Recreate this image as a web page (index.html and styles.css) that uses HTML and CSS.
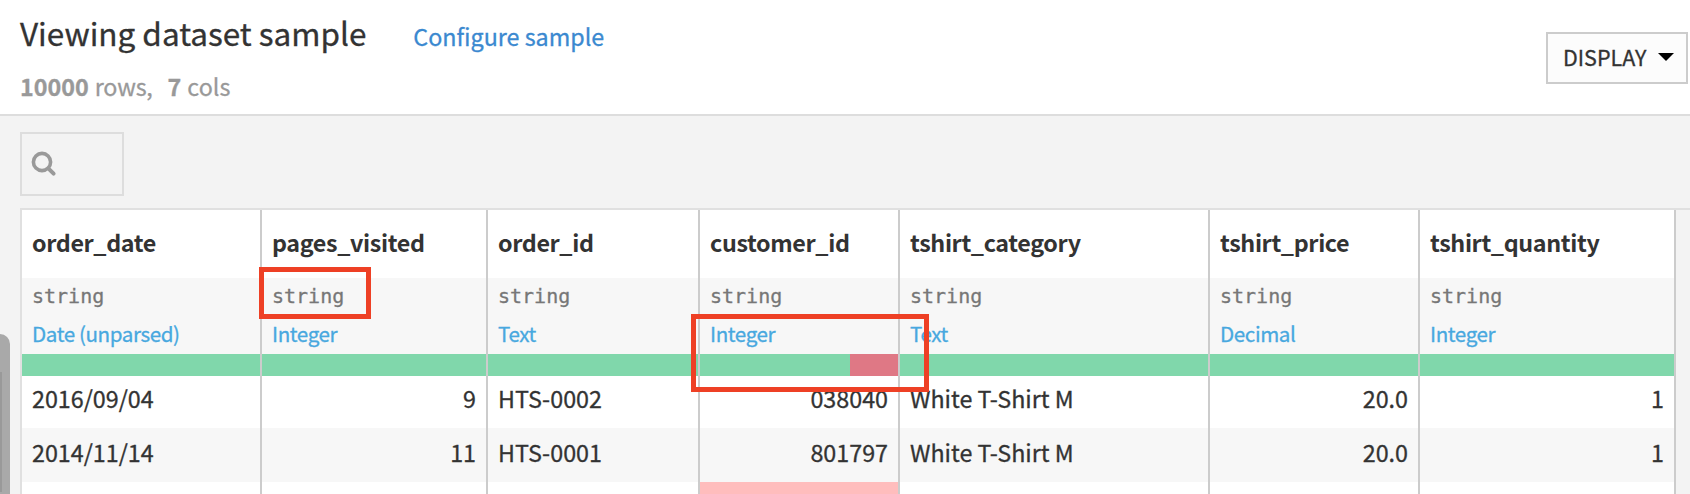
FILE: index.html
```html
<!DOCTYPE html>
<html lang="en">
<head>
<meta charset="utf-8">
<title>Dataset sample</title>
<link rel="stylesheet" href="styles.css">
</head>
<body>
<header class="header">
  <div class="info">
    <div class="heading"><h1 class="title">Viewing dataset sample</h1><a class="configure">Configure sample</a></div>
    <div class="counts"><b>10000</b><span class="rows">rows,</span><b>7</b><span>cols</span></div>
  </div>
  <button class="display"><span class="display-label">DISPLAY</span><svg width="16" height="8" viewBox="0 0 16 8"><path d="M0 0H16L8 8Z" fill="#000"/></svg></button>
</header>
<main class="main">
  <div class="search"><svg width="26" height="26" viewBox="0 0 26 26" fill="none" stroke="#999" stroke-linecap="round"><circle cx="11" cy="11" r="8.6" stroke-width="3.6"/><path d="M17.8 17.8L22.6 22.6" stroke-width="4"/></svg></div>
  <div class="grid">
    <section class="col c1"><h2 class="name"><span>order_date</span></h2><div class="meta"><div class="type">string</div><div class="meaning">Date (unparsed)</div></div><div class="quality"></div><div class="cell">2016/09/04</div><div class="cell alt">2014/11/14</div><div class="cell"></div></section>
    <section class="col c2 num"><h2 class="name"><span>pages_visited</span></h2><div class="meta"><div class="type">string</div><div class="meaning">Integer</div></div><div class="quality"></div><div class="cell">9</div><div class="cell alt">11</div><div class="cell"></div></section>
    <section class="col c3"><h2 class="name"><span>order_id</span></h2><div class="meta"><div class="type">string</div><div class="meaning">Text</div></div><div class="quality"></div><div class="cell">HTS-0002</div><div class="cell alt">HTS-0001</div><div class="cell"></div></section>
    <section class="col c4 num"><h2 class="name"><span>customer_id</span></h2><div class="meta"><div class="type">string</div><div class="meaning">Integer</div></div><div class="quality"><div class="invalid-part"></div></div><div class="cell">038040</div><div class="cell alt">801797</div><div class="cell invalid"></div></section>
    <section class="col c5"><h2 class="name"><span>tshirt_category</span></h2><div class="meta"><div class="type">string</div><div class="meaning">Text</div></div><div class="quality"></div><div class="cell">White T-Shirt M</div><div class="cell alt">White T-Shirt M</div><div class="cell"></div></section>
    <section class="col c6 num"><h2 class="name"><span>tshirt_price</span></h2><div class="meta"><div class="type">string</div><div class="meaning">Decimal</div></div><div class="quality"></div><div class="cell">20.0</div><div class="cell alt">20.0</div><div class="cell"></div></section>
    <section class="col c7 num"><h2 class="name"><span>tshirt_quantity</span></h2><div class="meta"><div class="type">string</div><div class="meaning">Integer</div></div><div class="quality"></div><div class="cell">1</div><div class="cell alt">1</div><div class="cell"></div></section>
  </div>
</main>
<div class="handle"></div>
<div class="mark mark-type"></div>
<div class="mark mark-quality"></div>
</body>
</html>
```
FILE: styles.css
```css
* { box-sizing: border-box; }
body {
  margin: 0;
  height: 494px;
  overflow: hidden;
  position: relative;
  background: #f3f3f3;
  color: #333;
  font: 23.3px/30px "Noto Sans CJK SC", "Noto Sans", sans-serif;
  -webkit-text-stroke: 0.3px;
}
svg { display: block; }
.header {
  display: flex;
  justify-content: space-between;
  height: 116px;
  padding: 14px 2px 0 20px;
  background: #fff;
  border-bottom: 2px solid #ddd;
}
.heading { display: flex; height: 40px; align-items: baseline; gap: 47px; }
.title { margin: 0; font-size: 31.5px; line-height: 36px; font-weight: 400; }
.configure { color: #3b89d0; }
.counts { display: flex; height: 30px; margin-top: 17px; color: #999; }
.counts b { font-weight: 700; margin-right: 6px; }
.rows { margin-right: 15px; letter-spacing: -0.2px; }
.display {
  display: flex;
  align-items: center;
  justify-content: space-between;
  width: 142px;
  height: 52px;
  margin-top: 18px;
  padding: 0 12px 2px 15px;
  border: 2px solid #ccc;
  background: #fcfcfc;
  color: #333;
  font: 21.5px/30px "Noto Sans CJK SC", "Noto Sans", sans-serif;
  -webkit-text-stroke: 0.3px;
}
.main { padding-top: 16px; }
.search {
  width: 104px;
  height: 64px;
  margin-left: 20px;
  padding: 17px 9px;
  border: 2px solid #ddd;
}
.grid {
  display: flex;
  height: 286px;
  margin: 12px 0 0 20px;
  border: solid #e0e0e0;
  border-width: 2px 0 0 2px;
}
.col { border-right: 2px solid #ccc; background: #fff; white-space: nowrap; overflow: hidden; }
.c1 { width: 240px; }
.c2 { width: 226px; }
.c3 { width: 212px; }
.c4 { width: 200px; }
.c5 { width: 310px; }
.c6 { width: 210px; }
.c7 { width: 256px; }
.name { margin: 0; height: 68px; padding: 17px 10px 0; font-size: 23.3px; line-height: 30px; font-weight: 700; letter-spacing: -0.36px; -webkit-text-stroke: 0; }
.meta { height: 76px; padding: 3px 10px 0; background: #f7f7f7; }
.type { color: #777; font: 20px/30px "DejaVu Sans Mono", monospace; }
.meaning { height: 30px; margin-top: 7px; color: #48a8df; font-size: 20.6px; letter-spacing: -0.4px; }
.quality { display: flex; justify-content: flex-end; height: 22px; background: #80d7ab; }
.invalid-part { width: 48px; background: #df7885; }
.cell { height: 52px; padding: 7px 10px 0; line-height: 30px; }
.cell.alt { height: 54px; padding-top: 9px; background: #f7f7f7; }
.num .cell { text-align: right; }
.cell.invalid { background: #ffbdbd; }
.handle {
  position: absolute;
  left: -10px;
  top: 334px;
  width: 20px;
  height: 180px;
  border-radius: 15px;
  background: linear-gradient(#999, #999) 0 38px / 12px 120px no-repeat #a9a9a9;
}
.mark { position: absolute; border: 5px solid #ee4025; }
.mark-type { left: 259px; top: 267px; width: 112px; height: 52px; }
.mark-quality { left: 691px; top: 314px; width: 238px; height: 78px; }
```
